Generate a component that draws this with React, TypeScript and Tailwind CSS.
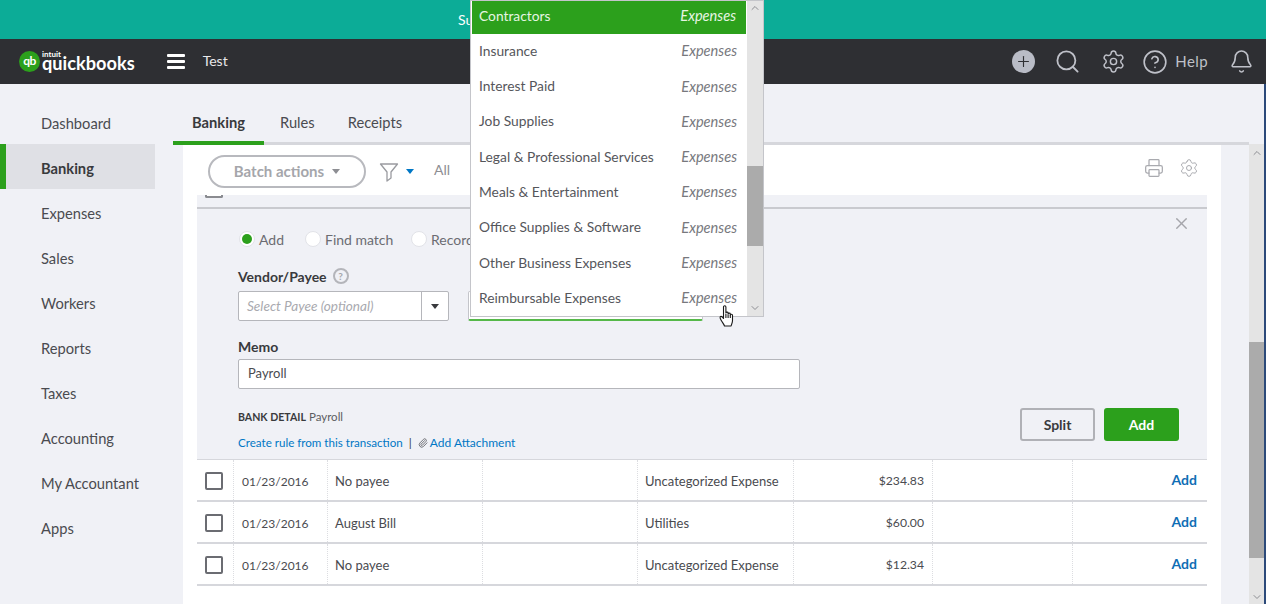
import { Search, Settings, Bell, CircleHelp, Printer, X, ChevronUp, ChevronDown, Paperclip, Plus } from "lucide-react";

const nav = ["Dashboard", "Banking", "Expenses", "Sales", "Workers", "Reports", "Taxes", "Accounting", "My Accountant", "Apps"];
const accounts = ["Contractors", "Insurance", "Interest Paid", "Job Supplies", "Legal & Professional Services", "Meals & Entertainment", "Office Supplies & Software", "Other Business Expenses", "Reimbursable Expenses"];
const rows = [
  ["01/23/2016", "No payee", "Uncategorized Expense", "$234.83"],
  ["01/23/2016", "August Bill", "Utilities", "$60.00"],
  ["01/23/2016", "No payee", "Uncategorized Expense", "$12.34"],
];

function Caret({ className }: { className: string }) {
  return <span className={`inline-block w-0 h-0 border-x-[4.5px] border-x-transparent border-t-[5px] ${className}`} />;
}

function Radio({ on, label, className }: { on?: boolean; label: string; className: string }) {
  return (
    <div className={`flex items-center gap-[4px] ${className}`}>
      <span className="w-[16px] h-[16px] rounded-full bg-white border border-[#e2e3e8] flex items-center justify-center">
        {on && <span className="w-[10px] h-[10px] rounded-full bg-[#2ca01c]" />}
      </span>
      <span className="text-[14px] text-[#6b6c72]">{label}</span>
    </div>
  );
}

export default function App() {
  return (
    <div className="relative w-[1266px] h-[604px] overflow-hidden bg-[#f0f1f6] flex flex-col font-['Lato','Liberation_Sans',sans-serif] text-[#393a3d]">
      <div className="h-[39px] bg-[#0cac97] pl-[458px] flex items-center text-[14px] text-white shrink-0">Su</div>

      <header className="h-[45px] bg-[#2e2f33] flex items-center shrink-0 text-white">
        <div className="w-[19px] shrink-0" />
        <span className="w-[21px] h-[21px] rounded-full bg-[#2ca01c] flex items-center justify-center text-[12px] font-bold tracking-[-0.5px] pb-[2px]">qb</span>
        <div className="ml-[2px] flex flex-col mt-[-5px]">
          <span className="text-[8px] leading-[8px] mt-[2px] font-bold">intuit</span>
          <span className="text-[18.2px] leading-[14px] -mt-[2px] font-bold">quickbooks</span>
        </div>
        <div className="ml-[32px] w-[18px] flex flex-col gap-[3px]">
          <span className="h-[3px] bg-white rounded-[1px]" />
          <span className="h-[3px] bg-white rounded-[1px]" />
          <span className="h-[3px] bg-white rounded-[1px]" />
        </div>
        <span className="ml-[18px] mt-[-3px] text-[14px] text-[#e8e8ea]">Test</span>
        <div className="ml-auto flex items-center text-[#bfc1c9]">
          <span className="w-[23px] h-[23px] rounded-full bg-[#b9bcc6] flex items-center justify-center">
            <Plus size={17} strokeWidth={1.6} className="text-[#2e2f33]" />
          </span>
          <Search size={27} strokeWidth={1.6} className="ml-[19px]" />
          <Settings size={25} strokeWidth={1.4} className="ml-[20px]" />
          <CircleHelp size={26} strokeWidth={1.5} className="ml-[16px]" />
          <span className="ml-[7px] text-[15px] tracking-[0.4px]">Help</span>
          <Bell size={25} strokeWidth={1.5} className="ml-[21px] mr-[12px]" />
        </div>
      </header>

      <div className="flex flex-1 min-h-0">
        <aside className="w-[155px] shrink-0 pt-[15px] bg-[#f0f1f6]">
          {nav.map((n) =>
            n === "Banking" ? (
              <div key={n} className="h-[45px] pt-[3px] bg-[#dfe0e5] border-l-[6px] border-[#2ca01c] pl-[35px] flex items-center text-[14.7px] font-bold text-[#393a3d]">{n}</div>
            ) : (
              <div key={n} className="h-[45px] pt-[3px] pl-[41px] flex items-center text-[14.7px] text-[#4a4b50]">{n}</div>
            )
          )}
        </aside>

        <main className="w-[1094px] shrink-0 flex flex-col">
          <div className="h-[61px] shrink-0 border-b-[3px] border-[#d6d7dc] flex items-end ml-[18px]">
            <div className="w-[91px] h-[34px] -mb-[3px] border-b-[4px] border-[#2ca01c] text-center text-[14.7px] font-bold leading-[22px]">Banking</div>
            <div className="ml-[16px] h-[31px] text-[14.7px] text-[#4a4b50] leading-[22px]">Rules</div>
            <div className="ml-[33px] h-[31px] text-[14.7px] text-[#4a4b50] leading-[22px]">Receipts</div>
          </div>

          <div className="flex-1 min-h-0 w-[1038px] ml-[28px] bg-white">
            <div className="h-[50px] px-[25px] flex items-center relative">
              <div className="w-[158px] h-[33px] mt-[3px] rounded-full border-2 border-[#b8b9be] flex items-center justify-center gap-[8px] text-[15px] font-bold text-[#a5a6ab]">
                Batch actions <Caret className="border-t-[#8d8e93]" />
              </div>
              <svg width="20" height="20" viewBox="0 0 20 20" className="ml-[13px] mt-[3px]" fill="none" stroke="#9a9ba0" strokeWidth="1.3">
                <path d="M1.5 2h17l-6.500 8v6l-4 3v-9z" strokeLinejoin="round" />
              </svg>
              <Caret className="ml-[7px] mt-[3px] border-t-[#0077c5]" />
              <span className="ml-[20px] mt-[-2px] text-[14px] text-[#8d8e93]">All</span>
              <Printer size={20} strokeWidth={1.5} className="ml-auto mr-[15px] text-[#a9aaaf] mt-[-4px]" />
              <Settings size={20} strokeWidth={1.2} className="mr-[-3px] text-[#a9aaaf] mt-[-4px]" />
            </div>

            <div className="mx-[14px]">
              <div className="relative h-[264px] bg-[#f0f1f6]">
                <div className="h-[14px] border-b-2 border-[#c9cacf]">
                  <div className="ml-[8px] w-[18px] h-[3px] bg-white border-x-2 border-b-2 border-[#8a8b90] rounded-b-[2px]" />
                </div>
                <X size={19} strokeWidth={1.7} className="absolute left-[975px] top-[19px] text-[#a5a6ab]" />
                <div className="h-[47px] flex items-center relative pt-[13px]">
                  <Radio on label="Add" className="ml-[42px] w-[66px]" />
                  <Radio label="Find match" className="w-[106px]" />
                  <Radio label="Record" className="" />
                </div>
                <div className="pl-[41px] mt-[11px] flex items-center h-[18px] gap-[6px]">
                  <span className="text-[14px] font-bold text-[#393a3d]">Vendor/Payee</span>
                  <span className="w-[16px] h-[16px] rounded-full border-2 border-[#b4b5ba] text-[10px] font-bold text-[#a5a6ab] flex items-center justify-center">?</span>
                </div>
                <div className="pl-[41px] mt-[6px] flex">
                  <div className="w-[211px] h-[30px] bg-white border border-[#b5b6bb] rounded-[2px] flex">
                    <div className="flex-1 pl-[8px] flex items-center text-[13.6px] italic text-[#a9aaaf]">Select Payee (optional)</div>
                    <div className="w-[27px] border-l border-[#b5b6bb] flex items-center justify-center">
                      <Caret className="border-t-[#393a3d]" />
                    </div>
                  </div>
                  <div className="ml-[19px] w-[235px] h-[30px] bg-white border border-[#c4c5ca] border-b-2 border-b-[#55b849] rounded-[2px]" />
                </div>
                <div className="pl-[41px] mt-[17px] text-[14px] font-bold text-[#393a3d] leading-[18px]">Memo</div>
                <div className="ml-[41px] mt-[3px] w-[562px] h-[30px] bg-white border border-[#b5b6bb] rounded-[2px] pl-[9px] flex items-center text-[13px] text-[#4a4b50]">Payroll</div>
                <div className="flex pl-[41px] pr-[28px] mt-[19px]">
                  <div>
                    <div className="text-[11.500px] leading-[16px] mt-[1px]">
                      <span className="text-[10.600px] font-bold text-[#393a3d]">BANK DETAIL</span>{" "}
                      <span className="text-[#5c5d62]">Payroll</span>
                    </div>
                    <div className="mt-[10px] flex items-center leading-[16px] text-[#0077c5]">
                      <span className="text-[11.600px]">Create rule from this transaction</span>
                      <span className="mx-[6px] text-[12px] text-[#393a3d]">|</span>
                      <Paperclip size={10} className="text-[#5c5d62] mr-[2px]" />
                      <span className="text-[12px]">Add Attachment</span>
                    </div>
                  </div>
                  <div className="ml-auto flex gap-[9px]">
                    <div className="w-[75px] h-[33px] rounded-[3px] border-2 border-[#b0b1b6] flex items-center justify-center text-[14px] font-bold text-[#393a3d]">Split</div>
                    <div className="w-[75px] h-[33px] rounded-[3px] bg-[#2ca01c] flex items-center justify-center text-[14px] font-bold text-white">Add</div>
                  </div>
                </div>
              </div>

              <div className="border-t border-[#d6d7dc]">
                {rows.map((r, i) => (
                  <div key={i} className="h-[42px] grid grid-cols-[36px_94px_155px_155px_156px_139px_140px_135px] border-b-2 border-[#d6d7dc] text-[13px] text-[#4a4b50]">
                    <div className="flex items-center justify-center pr-[2px] pt-[2px]">
                      <span className="w-[18px] h-[18px] border-2 border-[#6b6c72] rounded-[2px]" />
                    </div>
                    <div className="flex items-center pl-[8px] pt-[3px] border-l border-dotted border-[#dcdde1] text-[12px]">{r[0]}</div>
                    <div className="flex items-center pl-[7px] pt-[3px] border-l border-dotted border-[#dcdde1]">{r[1]}</div>
                    <div className="border-l border-dotted border-[#dcdde1]" />
                    <div className="flex items-center pl-[7px] pt-[3px] border-l border-dotted border-[#dcdde1]">{r[2]}</div>
                    <div className="flex items-center justify-end pr-[8px] pt-[3px] border-l border-dotted border-[#dcdde1] text-[12.200px]">{r[3]}</div>
                    <div className="border-l border-dotted border-[#dcdde1]" />
                    <div className="flex items-center justify-end pr-[10px] pb-[1px] border-l border-dotted border-[#dcdde1] text-[14px] font-bold text-[#0f6eb5]">Add</div>
                  </div>
                ))}
              </div>
            </div>
          </div>
        </main>

        <div className="w-[15px] shrink-0 mt-[60px] bg-[#e4e4e4] flex flex-col items-center relative">
          <ChevronUp size={12} className="text-[#8d8e93] mt-[3px]" />
          <div className="absolute left-0 top-[198px] w-full h-[216px] bg-[#ababab]" />
          <ChevronDown size={12} className="text-[#8d8e93] absolute bottom-[1px]" />
        </div>
        <div className="w-[2px] shrink-0 bg-[#2c4a7a]" />
      </div>

      {/* open account dropdown */}
      <div className="absolute left-[470px] top-0 w-[294px] h-[317px] bg-white border border-[#c4c5ca] flex">
        <div className="flex-1 pl-[1px]">
          {accounts.map((a, i) => (
            <div key={a} className={`flex items-center justify-between pl-[7px] pr-[10px] pb-[3px] text-[13.800px] ${i === 0 ? "h-[33px] mb-[1px] mr-[1px] bg-[#2ca01c] text-[#e6f5e3]" : "h-[35.3px] text-[#55565b]"}`}>
              <span>{a}</span>
              <span className={`italic text-[14.600px] ${i === 0 ? "text-[#e6f5e3]" : "text-[#77787d]"}`}>Expenses</span>
            </div>
          ))}
        </div>
        <div className="w-[16px] bg-[#e4e4e4] relative flex flex-col items-center">
          <ChevronUp size={12} className="text-[#8d8e93] mt-[1px]" />
          <div className="absolute left-0 top-[165px] w-full h-[80px] bg-[#ababab]" />
          <ChevronDown size={12} className="text-[#8d8e93] absolute bottom-[2px]" />
        </div>
      </div>

      {/* hand cursor */}
      <svg width="16" height="23" viewBox="0 0 16 23" className="absolute left-[719px] top-[305px]" fill="#fff" stroke="#1a1a1a" strokeWidth="1.1" strokeLinejoin="round">
        <path d="M4.500 2c0-1.600 2.400-1.600 2.400 0v6c0-1.200 2.200-1.200 2.200 0v1c0-1.200 2.200-1.200 2.200 0v1c0-1.100 2.200-1.100 2.200 0.200v5.300c0 2.500-1 3.500-1.400 5.500H5.500c-.6-2-2-3.200-3.500-6-1-1.800-1.300-3-.4-3.500.9-.5 1.900.5 2.900 2z" />
        <path d="M6.900 9v4M9.100 9.500v3.500M11.300 10v3" fill="none" />
      </svg>
    </div>
  );
}
